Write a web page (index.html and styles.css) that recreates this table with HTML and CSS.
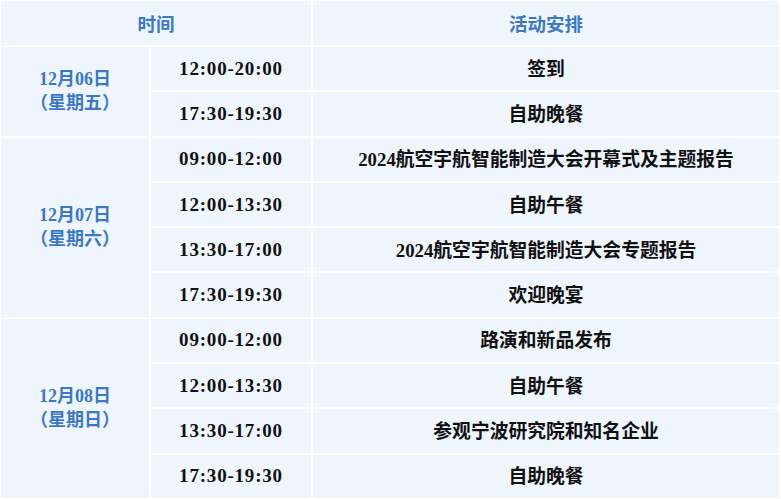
FILE: index.html
```html
<!DOCTYPE html>
<html lang="zh-CN">
<head>
<meta charset="utf-8">
<title>日程安排</title>
<link rel="stylesheet" href="styles.css">
</head>
<body>
<table class="schedule">
  <colgroup>
    <col class="c-date">
    <col class="c-time">
    <col class="c-act">
  </colgroup>
  <thead>
    <tr>
      <th colspan="2">时间</th>
      <th>活动安排</th>
    </tr>
  </thead>
  <tbody>
    <tr>
      <td class="date" rowspan="2">12月06日<br>（星期五）</td>
      <td class="time">12:00-20:00</td>
      <td class="act">签到</td>
    </tr>
    <tr>
      <td class="time">17:30-19:30</td>
      <td class="act">自助晚餐</td>
    </tr>
    <tr>
      <td class="date" rowspan="4">12月07日<br>（星期六）</td>
      <td class="time">09:00-12:00</td>
      <td class="act">2024航空宇航智能制造大会开幕式及主题报告</td>
    </tr>
    <tr>
      <td class="time">12:00-13:30</td>
      <td class="act">自助午餐</td>
    </tr>
    <tr>
      <td class="time">13:30-17:00</td>
      <td class="act">2024航空宇航智能制造大会专题报告</td>
    </tr>
    <tr>
      <td class="time">17:30-19:30</td>
      <td class="act">欢迎晚宴</td>
    </tr>
    <tr>
      <td class="date" rowspan="4">12月08日<br>（星期日）</td>
      <td class="time">09:00-12:00</td>
      <td class="act">路演和新品发布</td>
    </tr>
    <tr>
      <td class="time">12:00-13:30</td>
      <td class="act">自助午餐</td>
    </tr>
    <tr>
      <td class="time">13:30-17:00</td>
      <td class="act">参观宁波研究院和知名企业</td>
    </tr>
    <tr>
      <td class="time">17:30-19:30</td>
      <td class="act">自助晚餐</td>
    </tr>
  </tbody>
</table>
</body>
</html>
```

FILE: styles.css
```css
html, body {
  margin: 0;
  padding: 0;
  background: #ffffff;
  overflow: hidden;
}

.schedule {
  border-collapse: separate;
  border-spacing: 2px;
  width: 782px;
  margin: -1px 0 0 -1px;
  table-layout: fixed;
  font-family: "Liberation Serif", "Noto Sans CJK SC", serif;
  font-size: 18px;
  font-weight: 700;
  color: #111111;
}

.c-date { width: 148px; }
.c-time { width: 160px; }
.c-act { width: 466px; }

.schedule th,
.schedule td {
  background: #eef5fd;
  text-align: center;
  vertical-align: middle;
  padding: 0;
}

.schedule th {
  height: 44px;
  color: #3a78c8;
  font-size: 18.5px;
  font-weight: 700;
}

.schedule td {
  height: 43.3px;
}

.date {
  color: #3a78c8;
  line-height: 24px;
}

.time {
  letter-spacing: 0.8px;
  font-size: 19px;
}

.schedule td.act {
  font-size: 18.8px;
  font-weight: 600;
  padding-bottom: 3px;
  box-sizing: border-box;
}
```
